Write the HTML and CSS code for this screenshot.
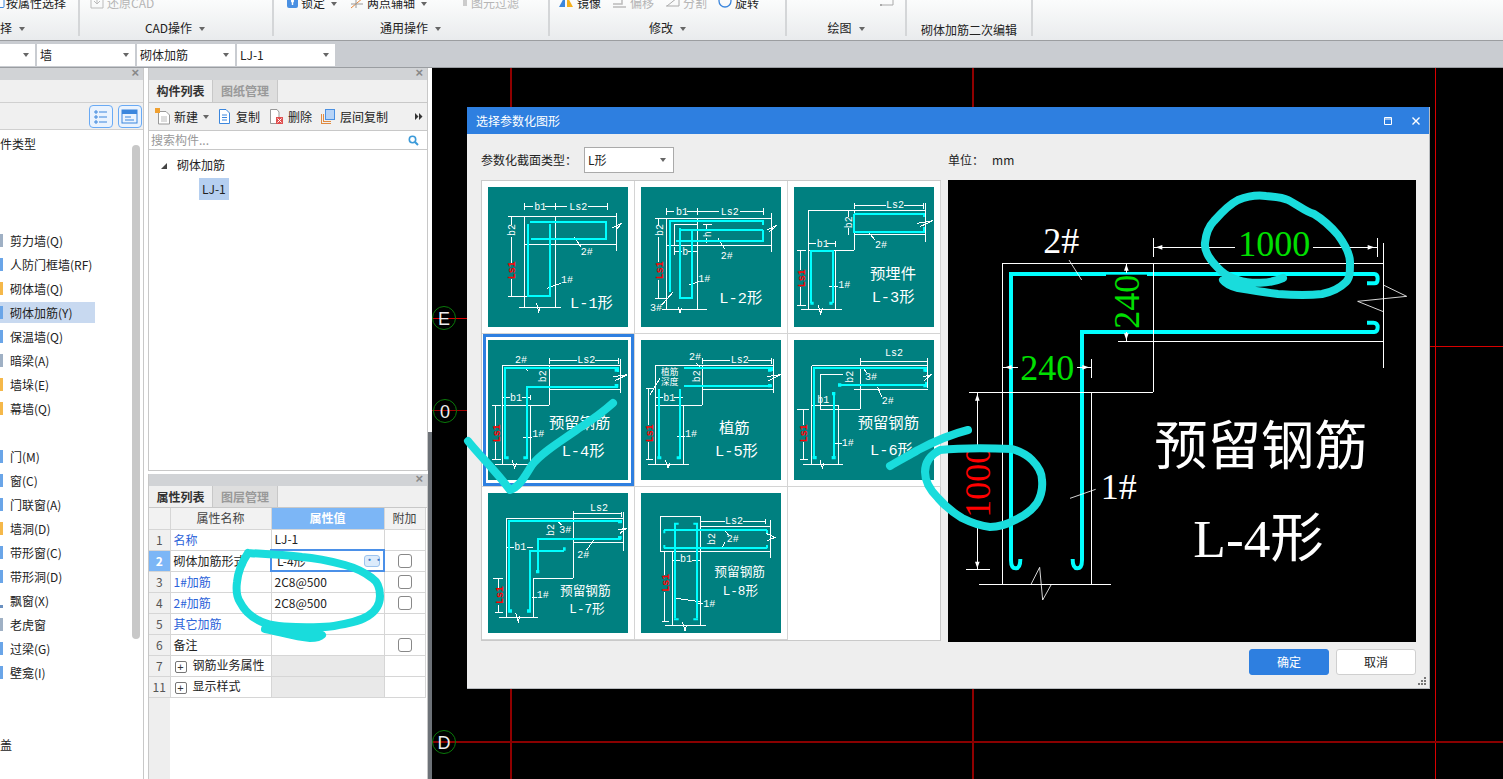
FILE: index.html
```html
<!DOCTYPE html>
<html lang="zh">
<head>
<meta charset="utf-8">
<title>砌体加筋</title>
<link rel="stylesheet" href="styles.css">
</head>
<body>
<div class="app">
  <header class="ribbon">
    <section class="group g1">
      <div class="tools"><span class="tool"><svg class="ic" width="5" height="13" viewBox="0 0 5 13"><rect x="-6" y="0.5" width="10" height="11" rx="1" fill="#fff" stroke="#3b86dd"/></svg>按属性选择</span></div>
      <div class="label">择<i class="caret"></i></div>
    </section>
    <section class="group g2">
      <div class="tools"><span class="tool off"><svg class="ic" width="14" height="13" viewBox="0 0 14 13"><path d="M1 12V3H5M9 3H13V12H1M7 1V8M4 5L7 8L10 5" fill="none" stroke="#bbb"/></svg>还原CAD</span></div>
      <div class="label c">CAD操作<i class="caret"></i></div>
    </section>
    <section class="group g3">
      <div class="tools">
        <span class="tool"><svg class="ic" width="11" height="13" viewBox="0 0 11 13"><rect width="11" height="12" y="0" rx="2" fill="#4a90e2"/><circle cx="5.5" cy="5" r="1.6" fill="#fff"/><rect x="4.8" y="5" width="1.4" height="4" fill="#fff"/></svg>锁定<i class="caret"></i></span>
        <span class="tool"><svg class="ic" width="14" height="13" viewBox="0 0 14 13"><path d="M1 12L13 2" stroke="#e8873a" fill="none"/><path d="M6 1V12M1 8H13" stroke="#999" fill="none"/></svg>两点辅轴<i class="caret"></i></span>
        <span class="tool off push"><svg class="ic" width="5" height="13" viewBox="0 0 5 13"><rect x="0" y="0" width="4" height="10" fill="#ccc"/></svg>图元过滤</span>
      </div>
      <div class="label c">通用操作<i class="caret"></i></div>
    </section>
    <section class="group g4">
      <div class="tools">
        <span class="tool"><svg class="ic" width="16" height="13" viewBox="0 0 16 13"><path d="M7 0L1 11H7Z" fill="#3b86dd"/><path d="M9 0L15 11H9Z" fill="#f5b01c"/></svg>镜像</span>
        <span class="tool off"><svg class="ic" width="15" height="13" viewBox="0 0 15 13"><path d="M1 11H14M1 8H10V3H13" fill="none" stroke="#bbb" stroke-width="1.5"/></svg>偏移</span>
        <span class="tool off"><svg class="ic" width="15" height="13" viewBox="0 0 15 13"><path d="M1 10H14V2M2 10L12 2" fill="none" stroke="#aaa"/></svg>分割</span>
        <span class="tool"><svg class="ic" width="14" height="13" viewBox="0 0 14 13"><circle cx="7" cy="5" r="6" fill="none" stroke="#3b86dd" stroke-width="1.3"/></svg>旋转</span>
      </div>
      <div class="label c">修改<i class="caret"></i></div>
    </section>
    <section class="group g5">
      <div class="tools"><svg class="ic" width="14" height="13" viewBox="0 0 14 13"><path d="M1 9H13V0" fill="none" stroke="#aaa"/><rect x="0" y="8" width="2" height="2" fill="#aaa"/></svg></div>
      <div class="label c">绘图<i class="caret"></i></div>
    </section>
    <section class="group g6">
      <div class="tools"></div>
      <div class="label c low">砌体加筋二次编辑</div>
    </section>
  </header>

  <nav class="combobar">
    <div class="combo first"><i class="caret"></i></div>
    <div class="combo">墙<i class="caret"></i></div>
    <div class="combo">砌体加筋<i class="caret"></i></div>
    <div class="combo">LJ-1<i class="caret"></i></div>
  </nav>

  <main class="workspace">
    <aside class="nav-panel">
      <div class="dock-head"><span class="x">×</span></div>
      <div class="nav-band"></div>
      <div class="nav-tools">
        <span class="viewbtn"><svg width="23" height="23" viewBox="0 0 23 23"><path d="M6 6H8V8H6ZM6 11H8V13H6ZM6 16H8V18H6ZM10 7H18M10 12H18M10 17H18" fill="none" stroke="#3b86dd"/></svg></span>
        <span class="viewbtn"><svg width="23" height="23" viewBox="0 0 23 23"><rect x="4" y="5" width="15" height="13" fill="none" stroke="#3b86dd"/><rect x="4" y="5" width="15" height="4" fill="#3b86dd"/><path d="M7 12H13M7 15H16" stroke="#3b86dd"/></svg></span>
      </div>
      <div class="nav-list">
        <div class="nav-item lead">件类型</div>
        <div class="nav-spacer"></div>
        <div class="nav-item"><i class="mk gr"></i>剪力墙(Q)</div>
        <div class="nav-item"><i class="mk bl"></i>人防门框墙(RF)</div>
        <div class="nav-item"><i class="mk or"></i>砌体墙(Q)</div>
        <div class="nav-item sel"><i class="mk bl"></i>砌体加筋(Y)</div>
        <div class="nav-item"><i class="mk bl"></i>保温墙(Q)</div>
        <div class="nav-item"><i class="mk gr"></i>暗梁(A)</div>
        <div class="nav-item"><i class="mk or"></i>墙垛(E)</div>
        <div class="nav-item"><i class="mk or"></i>幕墙(Q)</div>
        <div class="nav-item"></div>
        <div class="nav-item"><i class="mk bl"></i>门(M)</div>
        <div class="nav-item"><i class="mk bl"></i>窗(C)</div>
        <div class="nav-item"><i class="mk bl"></i>门联窗(A)</div>
        <div class="nav-item"><i class="mk or"></i>墙洞(D)</div>
        <div class="nav-item"><i class="mk bl"></i>带形窗(C)</div>
        <div class="nav-item"><i class="mk bl"></i>带形洞(D)</div>
        <div class="nav-item"><i class="mk dot"></i>飘窗(X)</div>
        <div class="nav-item"><i class="mk gr"></i>老虎窗</div>
        <div class="nav-item"><i class="mk bl"></i>过梁(G)</div>
        <div class="nav-item"><i class="mk bl"></i>壁龛(I)</div>
        <div class="nav-gap"></div>
        <div class="nav-item lead">盖</div>
      </div>
      <div class="scrollthumb"></div>
    </aside>

    <div class="mid">
      <section class="comp-panel">
        <div class="dock-head"><span class="x">×</span></div>
        <div class="tabs"><span class="tab on">构件列表</span><span class="tab">图纸管理</span></div>
        <div class="comp-tools">
          <span class="ct ct1"><svg width="16" height="17" viewBox="0 0 16 17"><path d="M3.5 3.5H11L14.5 7V16H3.5Z" fill="#fff" stroke="#999"/><path d="M6 9H12M6 11H12M6 13H12" stroke="#bbb"/><rect x="0" y="0" width="5" height="5" fill="#f0a030"/></svg>新建<i class="caret"></i></span>
          <span class="ct ct2"><svg width="13" height="17" viewBox="0 0 13 17"><path d="M1.5 1.5H8L11.5 5V15.5H1.5Z" fill="#fff" stroke="#3b86dd"/><path d="M4 7H9M4 9.5H9M4 12H9" stroke="#3b86dd"/></svg>复制</span>
          <span class="ct ct3"><svg width="14" height="17" viewBox="0 0 14 17"><path d="M1.5 1.5H8L10 4V15.5H1.5Z" fill="#fff" stroke="#999"/><rect x="7" y="9" width="7" height="7" fill="#e05050"/><path d="M8.5 10.5L12.5 14.5M12.5 10.5L8.5 14.5" stroke="#fff"/></svg>删除</span>
          <span class="ct ct4"><svg width="14" height="17" viewBox="0 0 14 17"><path d="M.5 16V6M.5 15.5H10M2.5 14V6M2.5 13.5H10" fill="none" stroke="#e08a40"/><rect x="4.5" y="1.5" width="9" height="10" fill="#b6d3f7" stroke="#4a90e2"/></svg>层间复制</span>
          <svg class="more" width="8" height="7" viewBox="0 0 8 7"><path d="M0 0L3.5 3.5L0 7ZM4 0L7.5 3.5L4 7Z" fill="#333"/></svg>
        </div>
        <div class="searchbox"><span>搜索构件...</span><svg width="11" height="11" viewBox="0 0 11 11"><circle cx="4.5" cy="4.5" r="3.2" fill="none" stroke="#3b9ad9" stroke-width="1.6"/><path d="M7 7L10 10" stroke="#3b9ad9" stroke-width="2"/></svg></div>
        <div class="tree">
          <div class="tree-root"><i class="tri"></i>砌体加筋</div>
          <div class="tree-leaf"><span>LJ-1</span></div>
        </div>
      </section>

      <section class="prop-panel">
        <div class="dock-head"><span class="x">×</span></div>
        <div class="tabs short"><span class="tab on">属性列表</span><span class="tab">图层管理</span></div>
        <table class="props">
          <colgroup><col class="c0"><col class="c1"><col class="c2"><col class="c3"></colgroup>
          <tr class="hd"><th></th><th>属性名称</th><th class="act">属性值</th><th>附加</th></tr>
          <tr><td class="no">1</td><td class="lnk">名称</td><td>LJ-1</td><td></td></tr>
          <tr><td class="no cur">2</td><td>砌体加筋形式</td><td class="edit"><div class="editbox"><span>L-4形</span><b>···</b></div></td><td class="ck"><i></i></td></tr>
          <tr><td class="no">3</td><td class="lnk">1#加筋</td><td>2C8@500</td><td class="ck"><i></i></td></tr>
          <tr><td class="no">4</td><td class="lnk">2#加筋</td><td>2C8@500</td><td class="ck"><i></i></td></tr>
          <tr><td class="no">5</td><td class="lnk">其它加筋</td><td></td><td></td></tr>
          <tr><td class="no">6</td><td>备注</td><td></td><td class="ck"><i></i></td></tr>
          <tr><td class="no">7</td><td><i class="plus">+</i>钢筋业务属性</td><td class="dis"></td><td></td></tr>
          <tr><td class="no">11</td><td><i class="plus">+</i>显示样式</td><td class="dis"></td><td></td></tr>
        </table>
        <div class="props-fill"><i></i></div>
      </section>
    </div>

    <div class="splitter"><i></i></div>

    <div class="canvas">
      <svg class="cad" viewBox="432 68 1071 711">
        <path class="ax dk wide" d="M511 68V120M511 689V779M973 68V120M973 689V779"/>
        <path class="ax br" d="M1435.5 68V779M432 318.5H480M1425 346.5H1503"/>
        <path class="ax dk" d="M432 410.5H480"/>
        <path class="ax dk2" d="M432 742H1503"/>
        <circle class="bub" cx="444" cy="318" r="11.5"/>
        <circle class="bub" cx="445" cy="411" r="11.5"/>
        <circle class="bub" cx="444" cy="742" r="11.5"/>
        <text class="axt" x="444" y="324.5">E</text>
        <text class="axt" x="445" y="417.5">0</text>
        <text class="axt" x="444" y="748.5">D</text>
      </svg>

      <div class="dialog">
        <div class="dlg-title">
          <span>选择参数化图形</span>
          <svg class="dlg-btns" width="36" height="8" viewBox="0 0 36 8"><path d="M.5 .5H7.5V7.5H.5ZM.5 2H7.5" fill="none" stroke="#fff"/><path d="M28.5 .5L35.5 7.5M35.5 .5L28.5 7.5" stroke="#fff" stroke-width="1.4"/></svg>
        </div>
        <div class="dlg-opts">
          <div class="dlg-type"><span>参数化截面类型：</span><div class="dlg-combo">L形<i class="caret"></i></div></div>
          <div class="dlg-unit">单位：<span class="unit-val">mm</span></div>
        </div>
        <div class="dlg-body">
          <div class="shapes">
            <div class="cell"><svg class="tile" viewBox="24 21 420 420">
              <path class="wl" d="M132 108H410M132 108V381M226 108V381M118 381H243M132 192H410M410 98V212M132 68V90M226 68V90M383 68V90M132 78H160M195 78H262M325 78H383M85 108H132M95 108V135M95 170V250M95 298V348M85 348H140M283 170L302 200M200 325L243 310M395 145L425 130L408 150M170 370L176 395L181 380"/>
              <path class="cy" d="M150 127H378V177H153M145 132V347H210V132"/>
              <text class="t" x="163" y="91">b1</text><text class="t" x="268" y="91">Ls2</text>
              <text class="t" transform="rotate(-90 106 168)" x="106" y="168">b2</text>
              <text class="t rd" transform="rotate(-90 106 298)" x="106" y="298">Ls1</text>
              <text class="t" x="302" y="226">2#</text><text class="t" x="243" y="309">1#</text>
              <text class="big" x="270" y="383">L-1形</text></svg></div>
            <div class="cell"><svg class="tile" viewBox="483 21 420 420">
              <path class="wl" d="M558 115H875M558 115V388M583 195V132H652M652 115V388M558 195H875M875 100V215M545 388H682M558 84V105M652 84V105M851 84V105M558 94H582M620 94H718M780 94H851M525 115H558M535 115V135M535 170V245M535 300V355M525 355H558M583 200V225M652 200V225M583 213H605M625 213H652M668 132H695M680 132V150M680 175V190M714 175L735 208M628 315L658 305M545 375L580 335M595 380L600 398L605 385M860 150L892 135L868 155"/>
              <path class="cy" d="M570 335V122H848V135M848 150H597M600 145V353H637V150M587 183H848V150"/>
              <text class="t" x="588" y="105">b1</text><text class="t" x="722" y="105">Ls2</text>
              <text class="t" transform="rotate(-90 548 168)" x="548" y="168">b2</text>
              <text class="t rd" transform="rotate(-90 548 298)" x="548" y="298">Ls1</text>
              <text class="t" transform="rotate(-90 692 172)" x="692" y="172">h</text>
              <text class="t" x="607" y="225">b</text><text class="t" x="722" y="236">2#</text>
              <text class="t" x="655" y="306">1#</text><text class="t" x="510" y="392">3#</text>
              <text class="big" x="718" y="370">L-2形</text></svg></div>
            <div class="cell"><svg class="tile" viewBox="42 21 420 420">
              <path class="wl" d="M85 91H436M85 91V388M166 211V388M85 211H223M223 91V211M223 163H436M436 70V185M62 388H185M223 70V88M223 77H318M372 77H430M430 70V88M197 91H220M205 91V110M205 145V165M52 211H78M62 211V270M62 322V375M52 375H78M88 190H108M142 190H166M166 183V200M148 320H175M263 153L285 180M412 130L458 122L420 140M115 375L122 402L127 385"/>
              <path class="cy" d="M222 102H432V112M222 102V155H432V142M92 370V213H160V370"/>
              <path class="sq" d="M91 365h10v9h-10ZM148 365h10v9h-10Z"/>
              <text class="t" x="110" y="200">b1</text><text class="t" x="318" y="84">Ls2</text>
              <text class="t" transform="rotate(-90 215 145)" x="215" y="145">b2</text>
              <text class="t rd" transform="rotate(-90 75 322)" x="75" y="322">Ls1</text>
              <text class="t" x="285" y="203">2#</text><text class="t" x="175" y="323">1#</text>
              <text class="big" x="270" y="298">预埋件</text>
              <text class="big" x="275" y="365">L-3形</text></svg></div>

            <div class="cell sel"><svg class="tile" viewBox="24 480 420 420">
              <path class="wl" d="M67 555H420M67 555V853M150 675V853M67 675H208M208 555V675M208 628H420M420 538V640M45 853H168M208 533V552M208 540H290M345 540H415M415 533V552M135 560L143 572M37 675H62M47 675V738M47 785V838M37 838H62M70 652H90M125 652H152M152 645V660M128 772H155M180 620H195M400 590L442 584L405 602M96 840L104 865L110 848"/>
              <path class="cy" d="M76 838V565H415V575M140 838V620H415"/>
              <path class="sq" d="M74 829h12v9h-12ZM130 829h12v9h-12ZM404 565h11v10h-11ZM404 612h11v10h-11Z"/>
              <text class="t" x="105" y="548">2#</text><text class="t" x="292" y="549">Ls2</text>
              <text class="t" transform="rotate(-90 198 607)" x="198" y="607">b2</text>
              <text class="t" x="90" y="663">b1</text>
              <text class="t rd" transform="rotate(-90 60 787)" x="60" y="787">Ls1</text>
              <text class="t" x="157" y="772">1#</text>
              <text class="big" x="207" y="745">预留钢筋</text>
              <text class="big" x="245" y="828">L-4形</text></svg></div>
            <div class="cell"><svg class="tile" viewBox="483 480 420 420">
              <path class="wl" d="M527 555H880M527 555V853M610 675V853M527 675H667M667 555V675M667 628H880M880 538V640M505 853H627M667 533V552M667 540H750M805 540H875M875 533V552M650 550L662 565M510 645L540 595M497 625H520M505 625V735M505 785V838M497 838H520M527 652H550M582 652H610M590 768H615M860 590L902 584L865 602M556 840L564 865L570 848"/>
              <path class="cy" d="M612 563H875V572M612 618H875M537 628V838M600 628V838"/>
              <path class="sq" d="M532 829h12v9h-12ZM590 829h12v9h-12ZM864 565h11v10h-11ZM864 612h11v10h-11Z"/>
              <text class="t" x="627" y="541">2#</text><text class="t" x="752" y="549">Ls2</text>
              <text class="sm" x="543" y="586">植筋</text><text class="sm" x="543" y="616">深度</text>
              <text class="t" transform="rotate(-90 660 607)" x="660" y="607">b2</text>
              <text class="t" x="550" y="663">b1</text>
              <text class="t rd" transform="rotate(-90 519 787)" x="519" y="787">Ls1</text>
              <text class="t" x="615" y="772">1#</text>
              <text class="big" x="717" y="758">植筋</text>
              <text class="big" x="705" y="828">L-5形</text></svg></div>
            <div class="cell"><svg class="tile" viewBox="42 480 420 420">
              <path class="wl" d="M95 557H445M95 557V853M175 675V853M121 688H241M121 688V582H190M241 565V688M95 675H175M222 628H445M441 535V625M241 533V555M241 545H445M50 688H88M70 688V735M70 785V838M60 838H85M250 565L262 580M292 620L305 650M165 790H185M70 853H190M120 840L127 865L132 848M428 590L455 584L432 602"/>
              <path class="cy" d="M103 835V565H437V575M175 615H437V605M162 635V835"/>
              <path class="sq" d="M98 828h12v10h-12ZM155 828h12v10h-12ZM430 565h11v10h-11ZM430 612h11v10h-11ZM174 610h10v10h-10ZM156 636h10v10h-10Z"/>
              <text class="t" x="315" y="529">Ls2</text><text class="t" x="112" y="669">b1</text>
              <text class="t" transform="rotate(-90 218 608)" x="218" y="608">b2</text>
              <text class="t" x="255" y="601">3#</text><text class="t" x="305" y="673">2#</text>
              <text class="t rd" transform="rotate(-90 81 787)" x="81" y="787">Ls1</text>
              <text class="t" x="185" y="797">1#</text>
              <text class="big" x="233" y="745">预留钢筋</text>
              <text class="big" x="270" y="825">L-6形</text></svg></div>

            <div class="cell"><svg class="tile" viewBox="24 39 420 420">
              <path class="wl" d="M78 115H430M78 115V411M160 294V411M160 294H280M280 92V294M280 187H430M430 95V212M56 411H175M280 100H425M425 95V110M235 125L245 135M343 178L320 210M80 202H103M140 202H160M40 294H70M55 294V325M55 375V397M45 397H70M155 352H170M107 398L115 425L120 408M415 150L440 144L420 160"/>
              <path class="cy" d="M88 395V123H422V130M173 275V178H422M150 395V212H252"/>
              <path class="sq" d="M84 388h12v10h-12ZM141 388h12v10h-12ZM168 270h10v10h-10ZM249 202h8v10h-8ZM414 120h11v10h-11ZM414 168h11v10h-11Z"/>
              <text class="t" x="330" y="92">Ls2</text><text class="t" x="103" y="210">b1</text>
              <text class="t" transform="rotate(-90 223 168)" x="223" y="168">b2</text>
              <text class="t" x="238" y="160">3#</text><text class="t" x="292" y="233">2#</text>
              <text class="t rd" transform="rotate(-90 69 372)" x="69" y="372">Ls1</text>
              <text class="t" x="170" y="355">1#</text>
              <text class="mid-t" x="240" y="345">预留钢筋</text>
              <text class="mid-t" x="268" y="400">L-7形</text></svg></div>
            <div class="cell"><svg class="tile" viewBox="483 39 420 420">
              <path class="wl" d="M541 108H660V215H541ZM660 140H870M660 215H870M870 120V235M577 215V435M660 215V435M555 435H677M660 118V133M660 125H735M790 125H857M857 118V133M735 152L745 165M735 185L725 205M578 240H600M635 240H660M552 215V285M552 335V425M545 425H567M587 355L660 365M650 370H670M607 425L615 452L620 435M858 160L885 172L862 182"/>
              <path class="cy" d="M585 415V130M650 415V130M553 150H862M553 203H862"/>
              <path class="sq" d="M582 128h14v6h-14ZM640 128h14v6h-14ZM582 415h14v6h-14ZM640 415h14v6h-14ZM550 150h6v10h-6ZM550 195h6v10h-6ZM858 150h6v10h-6ZM858 195h6v10h-6Z"/>
              <text class="t" x="735" y="132">Ls2</text><text class="t" x="600" y="245">b1</text>
              <text class="t" transform="rotate(-90 706 195)" x="706" y="195">b2</text>
              <text class="t" x="740" y="186">2#</text>
              <text class="t rd" transform="rotate(-90 566 335)" x="566" y="335">Ls1</text>
              <text class="t" x="670" y="380">1#</text>
              <text class="mid-t" x="703" y="288">预留钢筋</text>
              <text class="mid-t" x="728" y="345">L-8形</text></svg></div>
            <div class="cell empty"></div>
          </div>

          <div class="preview">
            <svg class="pv" viewBox="9 30 1404 1386">
              <path class="cyb" d="M198 1170V312H1288Q1298 312 1298 326Q1298 340 1288 340H1266M411 1170V486H1288Q1298 486 1298 472Q1298 458 1285 458H1266M198 1170Q198 1195 212 1195Q226 1195 226 1167M411 1170Q411 1195 397 1195Q383 1195 383 1167"/>
              <rect class="blk" x="483" y="314" width="123" height="166"/>
              <path class="wlp" d="M172 1243V280H1315M625 280V667M140 667H625M72 667H140M439 667V1243M102 1243H498M520 514H1315M1315 220V595M625 205V262M1297 205V262M625 232H870M1103 232H1297M544 282V310M544 485V514M175 592H218M396 592H439M439 568V625M97 667V825M97 1065V1198M63 1198H135"/>
              <path class="wth" d="M372 270L410 330M375 985L452 958M258 1243L284 1192L293 1290L318 1245M1315 345L1385 379L1238 394L1315 425"/>
              <path class="arr" d="M632 232l20-7v14ZM1288 232l-20-7v14ZM544 282l-7 20h14ZM544 510l-7-20h14ZM180 592l20-7v14ZM432 592l-20-7v14ZM97 672l-7 20h14ZM97 1195l-7-20h14Z"/>
              <text class="s wt" x="295" y="250">2#</text>
              <text class="s wt" x="467" y="988">1#</text>
              <text class="s gn" x="880" y="257">1000</text>
              <text class="s gn" x="226" y="630">240</text>
              <text class="s gn" transform="rotate(-90 582 476)" x="582" y="476">240</text>
              <text class="s rdb" transform="rotate(-90 135 1043)" x="135" y="1043">1000</text>
              <text class="s wbig" x="628" y="885">预留钢筋</text>
              <text class="s wbig" x="745" y="1160">L-4形</text>
            </svg>
          </div>
        </div>
        <div class="dlg-foot">
          <button class="btn primary">确定</button>
          <button class="btn">取消</button>
          <svg class="grip" width="8" height="8" viewBox="0 0 8 8"><path d="M6 0h2v2H6ZM3 3h2v2H3ZM6 3h2v2H6ZM0 6h2v2H0ZM3 6h2v2H3ZM6 6h2v2H6Z" fill="#777"/></svg>
        </div>
      </div>
    </div>
  </main>
</div>

<svg class="marks" viewBox="0 0 1503 779">
  <path class="ink" d="M468 441C480 456 495 470 510 490C520 487 526 474 532 465C542 452 560 442 578 429C592 420 603 412 613 403"/>
  <path class="ink" d="M1283 278C1270 284 1250 284 1238 280C1226 276 1222 272 1218 268C1210 260 1204 252 1205 243C1206 233 1209 226 1214 221C1222 212 1230 204 1238 200C1248 196 1258 195 1266 196C1276 197 1282 197 1288 200C1298 205 1306 212 1314 214C1324 220 1332 228 1338 235C1346 246 1350 254 1350 262C1350 272 1350 278 1346 282C1340 288 1332 292 1322 294C1306 296 1290 295 1278 294C1262 292 1250 290 1238 288C1230 286 1226 284 1223 280"/>
  <path class="ink" d="M890 466C900 460 908 456 918 450C935 441 952 434 968 430"/>
  <path class="ink" d="M940 450C960 448 985 448 1012 449C1022 452 1028 456 1032 460C1038 466 1042 472 1042 480C1043 490 1040 498 1037 503C1032 510 1024 516 1015 520C1006 525 1000 527 990 527C980 526 970 522 962 518C952 512 945 506 938 498C930 490 925 482 925 472C925 462 930 455 940 450Z"/>
  <path class="ink" d="M248 553C242 562 238 572 237 582C236 590 236 596 240 602C244 610 250 616 258 620C268 626 282 627 296 627C310 627 322 628 334 626C346 624 358 622 368 616C376 611 380 604 380 596C380 588 378 582 372 578C364 572 356 568 345 565C330 561 316 558 302 557C285 555 266 554 248 553"/>
  <path class="ink" d="M265 629C280 632 296 637 310 638C316 638 320 637 322 635C310 631 296 630 282 630"/>
</svg>
</body>
</html>
```
FILE: styles.css
```css
* { box-sizing: border-box; }
html, body { margin: 0; padding: 0; }
body {
  width: 1503px; height: 779px; overflow: hidden; position: relative;
  background: #fff;
  font: 12px/14px "Noto Sans CJK SC", "Liberation Sans", sans-serif;
  color: #222;
}
.app { display: flex; flex-direction: column; height: 779px; }

/* ribbon */
.ribbon {
  height: 41px; flex: none; display: flex; overflow: hidden;
  background: linear-gradient(#fbfcfc, #e9ebed);
  border-bottom: 1px solid #9b9da0;
}
.group { position: relative; flex: none; border-right: 2px solid #d4d6d8; margin-bottom: 4px; display: flex; flex-direction: column; }
.g1 { width: 80px; }
.g2 { width: 194px; padding-left: 10px; }
.g3 { width: 276px; padding-left: 13px; }
.g4 { width: 237px; padding-left: 8px; }
.g5 { width: 120px; padding-left: 93px; }
.g6 { width: 126px; }
.tools { display: flex; gap: 12px; height: 14px; margin-top: -4px; flex: none; }
.tool { display: inline-flex; align-items: flex-start; white-space: nowrap; gap: 3px; }
.ic { flex: none; margin-top: 0; }
.g1 .tool { gap: 1px; }
.g3 .tools { gap: 13px; }
.g4 .tools { gap: 11px; }
.g3 .push { margin-left: 23px; }
.off { color: #b5b5b5; }
.label { margin-top: 10px; height: 16px; line-height: 16px; white-space: nowrap; }
.label.c { text-align: center; padding-right: 0; }
.g2 .label, .g3 .label, .g4 .label { margin-left: -10px; }
.g2 .label { padding-right: 2px; }
.g3 .label { margin-left: -13px; padding-right: 1px; }
.g4 .label { margin-left: -8px; }
.g5 .label { margin-left: -93px; }
.label.low { margin-top: 12px; }
.caret {
  display: inline-block; width: 0; height: 0; margin-left: 7px; vertical-align: 2px;
  border: 3.5px solid transparent; border-top: 4px solid #666; border-bottom: 0;
}
.tool .caret { margin: 6px 0 0 3px; }

/* combo bar */
.combobar {
  height: 27px; flex: none; display: flex; gap: 2px; align-items: flex-start;
  padding-top: 3px; background: #c9ccd1; border-bottom: 1px solid #9a9da1;
}
.combo {
  position: relative; width: 98px; height: 22px; background: #fff; padding: 0 3px;
  line-height: 21px; font-size: 12px; color: #222;
}
.combo.first { width: 35px; }
.combo .caret { position: absolute; right: 6px; top: 9px; margin: 0; }

/* workspace */
.workspace { flex: 1; display: flex; min-height: 0; background: #fff; }
.dock-head { height: 12px; background: #d1d3d6; position: relative; flex: none; }
.dock-head .x { position: absolute; right: 4px; top: -2px; color: #888; font: 13px/14px "Liberation Sans", sans-serif; font-weight: bold; }

.nav-panel { position: relative; width: 144px; flex: none; border-right: 1px solid #c8c8c8; display: flex; flex-direction: column; overflow: hidden; }
.nav-band { height: 22px; background: #f0f0f0; flex: none; }
.nav-tools { height: 28px; flex: none; background: #f0f0f0; border-top: 1px solid #d0d0d0; border-bottom: 1px solid #d0d0d0; display: flex; justify-content: flex-end; gap: 5px; padding: 2px 1px 0 0; }
.viewbtn { width: 24px; height: 23px; border: 1px solid #69aaf5; border-radius: 4px; background: #eaf3fe; display: block; margin-top: 0; }
.viewbtn svg { display: block; margin: -1px; }
.nav-list { flex: 1; padding-top: 2px; background: #fff; }
.nav-item { height: 24px; line-height: 23px; padding-left: 10px; position: relative; white-space: nowrap; }
.nav-item.lead { padding-left: 0; }
.nav-item.sel { isolation: isolate; }
.nav-item.sel::before { content: ""; position: absolute; left: 0; top: 1px; width: 95px; height: 21px; background: #c8d9f0; z-index: -1; }
.nav-spacer { height: 73px; }
.nav-gap { height: 48px; }
.mk { position: absolute; left: 0; top: 5px; width: 3px; height: 13px; }
.mk.bl { background: #6aa5e8; }
.mk.gr { background: #9fb0c4; }
.mk.or { background: #f5b84a; }
.mk.dot { background: #6a90c0; top: 16px; height: 3px; }
.scrollthumb { position: absolute; left: 132px; top: 77px; width: 8px; height: 494px; border-radius: 4px; background: #c8c8c8; }

.mid { width: 280px; margin-left: 4px; flex: none; display: flex; flex-direction: column; }
.comp-panel { height: 403px; flex: none; border: 1px solid #c8c8c8; border-top: 0; border-bottom: 1px solid #c8c8c8; display: flex; flex-direction: column; }
.tabs { height: 23px; flex: none; display: flex; background: #f0f0f0; border-bottom: 1px solid #c8c8c8; }
.tabs.short { height: 22px; }
.tab { width: 65px; text-align: center; line-height: 22px; font-weight: 700; color: #999; background: #dedede; border-right: 1px solid #c8c8c8; }
.tab.on { color: #333; background: #f0f0f0; width: 64px; }
.comp-tools { position: relative; height: 28px; flex: none; background: #f0f0f0; border-bottom: 1px solid #c8c8c8; display: flex; align-items: center; }
.ct { display: inline-flex; align-items: center; gap: 3px; white-space: nowrap; }
.ct1 { margin-left: 6px; }
.ct2 { margin-left: 9px; gap: 5px; }
.ct3 { margin-left: 9px; gap: 5px; }
.ct4 { margin-left: 9px; gap: 5px; }
.ct .caret { margin: 0 0 0 2px; }
.more { position: absolute; right: 4px; top: 10px; }
.searchbox { height: 19px; flex: none; border-bottom: 1px solid #c8c8c8; display: flex; align-items: center; justify-content: space-between; padding: 0 8px 0 2px; color: #999; }
.tree { flex: 1; padding-top: 4px; }
.tree-root { height: 22px; line-height: 22px; padding-left: 28px; position: relative; }
.tri { position: absolute; left: 12px; top: 9px; width: 0; height: 0; border-left: 6px solid transparent; border-bottom: 6px solid #444; }
.tree-leaf { padding-left: 50px; height: 22px; margin-top: 2px; }
.tree-leaf span { display: block; width: 30px; height: 22px; line-height: 21px; padding-left: 3px; background: #b5cff0; }

.prop-panel { flex: 1; margin-top: 3px; border-left: 1px solid #c8c8c8; border-right: 1px solid #c8c8c8; display: flex; flex-direction: column; min-height: 0; }
.props { border-collapse: collapse; table-layout: fixed; width: 276px; flex: none; }
.c0 { width: 21px; } .c1 { width: 101px; } .c2 { width: 113px; } .c3 { width: 41px; }
.props th, .props td { height: 21px; padding: 0 3px; border: 1px solid #d6d6d6; font-weight: 400; white-space: nowrap; overflow: hidden; }
.props tr:first-child th { border-top: 0; }
.props th:first-child, .props td:first-child { border-left: 0; padding: 0; }
.props th { background: #f2f2f2; text-align: center; color: #444; }
.props th.act { background: #7cb6f6; color: #fff; font-weight: 700; }
.props td.no { background: #f0f0f0; text-align: center; color: #555; }
.props td.cur { background: #7cb6f6; color: #fff; font-weight: 700; }
.props td.lnk { color: #2b62d9; }
.props td.dis { background: #e9e9e9; }
.props td.edit { padding: 0; border: 2px solid #4b90e8; }
.editbox { display: flex; justify-content: space-between; align-items: center; padding: 0 3px 0 5px; height: 17px; }
.editbox b { width: 16px; height: 12px; line-height: 8px; border-radius: 3px; background: #dcebfb; border: 1px solid #9cc3ee; color: #3b78c8; font-size: 9px; text-align: center; }
.ck { text-align: center; }
.ck i { display: inline-block; width: 14px; height: 14px; border: 1px solid #888; border-radius: 3px; background: #fff; vertical-align: middle; }
.plus { display: inline-block; width: 12px; height: 12px; margin: 0 6px 0 1px; border: 1px solid #777; border-radius: 2px; font: 11px/10px "Liberation Sans", sans-serif; text-align: center; vertical-align: -1px; color: #333; }
.props-fill { flex: 1; }
.props-fill i { display: block; width: 21px; height: 100%; background: #eeeeee; }

.splitter { width: 4px; flex: none; position: relative; }
.splitter i { position: absolute; right: 0; top: 364px; width: 4px; bottom: 0; background: #6d7278; }

/* canvas */
.canvas { flex: 1; position: relative; background: #000; overflow: hidden; }
.cad { position: absolute; inset: 0; width: 100%; height: 100%; display: block; }
.ax { fill: none; stroke-width: 1; shape-rendering: crispEdges; }
.ax.dk { stroke: #a00000; }
.ax.wide { stroke-width: 2; stroke: #900000; }
.ax.br { stroke: #d80000; }
.ax.dk2 { stroke: #8a0000; stroke-width: 2; }
.bub { fill: none; stroke: #0a7a0a; }
.axt { fill: #eee; font: 18px "Liberation Sans", sans-serif; text-anchor: middle; }

/* dialog */
.dialog { position: absolute; left: 35px; top: 39px; width: 963px; height: 582px; background: #eeeeee; border-right: 1px solid #b9bcc0; border-bottom: 1px solid #b9bcc0; display: flex; flex-direction: column; }
.dlg-title { height: 27px; flex: none; background: #2e7fe0; color: #fff; display: flex; align-items: center; justify-content: space-between; padding: 0 9px 0 9px; }
.dlg-btns { display: block; }
.dlg-opts { display: flex; height: 46px; flex: none; padding: 13px 0 0 14px; }
.dlg-type { width: 467px; display: flex; align-items: flex-start; }
.dlg-type > span { line-height: 26px; width: 103px; }
.dlg-combo { position: relative; width: 90px; height: 26px; background: #fff; border: 1px solid #aaa; line-height: 24px; padding-left: 3px; }
.dlg-combo .caret { position: absolute; right: 7px; top: 10px; margin: 0; }
.dlg-unit { line-height: 26px; }
.unit-val { margin-left: 8px; }
.dlg-body { display: flex; gap: 7px; padding-left: 14px; flex: none; }
.shapes { width: 460px; height: 461px; background: #fff; border: 1px solid #c9c9c9; display: grid; grid-template-columns: repeat(3, 153px); grid-auto-rows: 153px; align-content: start; }
.cell { position: relative; padding: 6px; border-right: 1px solid #d4d4d4; border-bottom: 1px solid #d4d4d4; }
.cell.empty { border: 0; }
.cell.sel::after { content: ""; position: absolute; left: 1px; top: 0; right: 0; bottom: 0; border: 3px solid #2e7fe0; }
.tile { display: block; width: 140px; height: 140px; background: #008080; }
.wl { fill: none; stroke: #fff; stroke-width: 3; shape-rendering: crispEdges; }
.cy { fill: none; stroke: #00ffff; stroke-width: 6; shape-rendering: crispEdges; }
.sq { fill: #00ffff; }
.tile text { fill: #fff; font-family: "Liberation Mono", "Noto Sans CJK SC", monospace; }
.tile .t { font-size: 30px; }
.tile .rd { fill: #ff0000; font-weight: 700; }
.tile .big { font-size: 46px; }
.tile .mid-t { font-size: 38px; }
.tile .sm { font-size: 26px; }
.preview { width: 468px; height: 462px; background: #000; }
.pv { display: block; width: 468px; height: 462px; }
.cyb { fill: none; stroke: #00ffff; stroke-width: 12; }
.blk { fill: #000; }
.wlp { fill: none; stroke: #fff; stroke-width: 3; shape-rendering: crispEdges; }
.wth { fill: none; stroke: #fff; stroke-width: 2.5; }
.arr { fill: #fff; }
.pv .s { font-family: "Liberation Serif", "Noto Sans CJK SC", serif; font-size: 108px; }
.pv .wt { fill: #fff; }
.pv .gn { fill: #00e000; }
.pv .rdb { fill: #ff0000; }
.pv .wbig { fill: #fff; font-size: 160px; }

.dlg-foot { position: relative; flex: 1; display: flex; justify-content: flex-end; gap: 7px; padding: 7px 13px 0 0; }
.btn { width: 80px; height: 26px; border: 1px solid #cfcfcf; border-radius: 3px; background: #fff; color: #222; font: inherit; padding: 0; }
.btn.primary { background: #2e7fe0; border-color: #2e7fe0; color: #fff; }
.grip { position: absolute; right: 3px; bottom: 3px; }

/* hand-drawn marks over the screenshot */
.marks { position: absolute; left: 0; top: 0; width: 1503px; height: 779px; pointer-events: none; }
.ink { fill: none; stroke: #19dcdc; stroke-width: 8; stroke-linecap: round; stroke-linejoin: round; }
```
